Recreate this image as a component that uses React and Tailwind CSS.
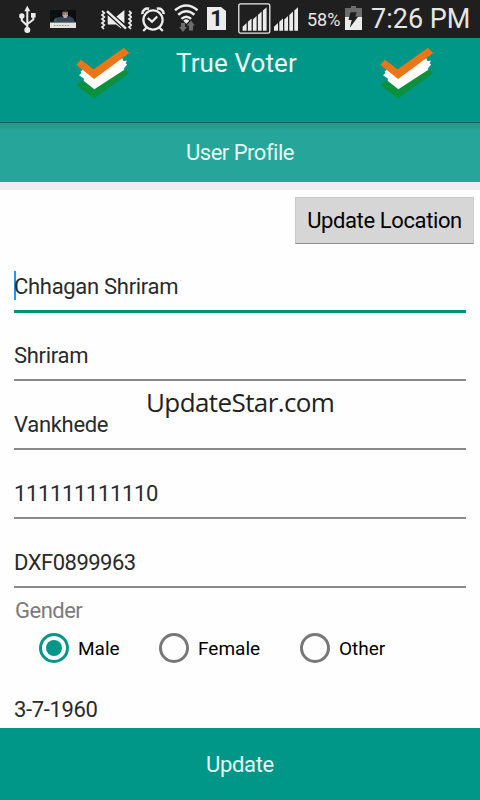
import { useState } from "react";
import clsx from "clsx";

const fields = [
  { name: "firstName", value: "Chhagan Shriram", spacing: "tracking-[-0.3px]" },
  { name: "middleName", value: "Shriram", spacing: "tracking-[-0.3px]" },
  { name: "lastName", value: "Vankhede", spacing: "tracking-[-0.3px]" },
  { name: "mobile", value: "111111111110", spacing: "tracking-[-0.37px]" },
  { name: "voterId", value: "DXF0899963", spacing: "tracking-[-0.5px]" },
];

const genders = [
  { label: "Male", width: "w-[120px]" },
  { label: "Female", width: "w-[141px]" },
  { label: "Other", width: "w-[100px]" },
];

function SignalBars({ x, y }) {
  return (
    <g transform={`translate(${x} ${y})`} fill="#ececec">
      <path d="M0 23.5V19.5L4 15.7V23.5ZM5.3 23.5V14.6L9 11.2V23.5ZM10.3 23.5V12.2L14 8.8V23.5ZM15.3 23.5V7.8L19 4.4V23.5ZM20.3 23.5V3.4L24 0V23.5Z" />
    </g>
  );
}

function StatusBar() {
  return (
    <div className="flex h-[38px] shrink-0 bg-[#1f1f1f] text-[#e6e6e6]">
      {/* usb */}
      <svg className="ml-[18px] h-[38px] w-5" viewBox="18 0 20 38" fill="none" stroke="#ececec" strokeWidth="2">
        <path d="M27.3 10V29M21.8 16V20.5L27 25.5M33.3 16V19.5L27.5 24" />
        <path d="M27.3 5.8L30.3 11.2H24.3Z" fill="#ececec" stroke="none" />
        <circle cx="27.3" cy="30" r="3" fill="#ececec" stroke="none" />
        <circle cx="21.8" cy="16" r="2.7" fill="#ececec" stroke="none" />
        <path d="M31 13h4.6v4.6H31z" fill="#ececec" stroke="none" />
      </svg>
      {/* notification thumbnail */}
      <svg className="ml-3 h-[38px] w-[26px]" viewBox="50 0 26 38">
        <path d="M50 10h26v18H50z" fill="#0c0f10" />
        <path d="M53.5 22l2-4 6-1.5 3 1 5-1.5 4 2.5 1 3.5z" fill="#31465a" />
        <path d="M53.5 21l2-3 1.5.5-1 3z" fill="#356b57" />
        <path d="M62.5 12h5.5v3.5L66.5 18h-2.5L62.5 15.5z" fill="#c2a698" />
        <path d="M62.4 12.6q0-2.2 2.9-2.2t2.9 2.2z" fill="#3b3836" />
        <path d="M63 14h2M66 14h2" stroke="#3c3430" strokeWidth=".8" />
        <path d="M50 22.5h26V28H50z" fill="#e3e4e1" />
        <path d="M50 22.3h26" stroke="#9a7470" strokeWidth="1" strokeDasharray="2 1.3" />
        <path d="M54 25.5h15" stroke="#8e928c" strokeWidth="1" strokeDasharray="1.5 1.2" />
      </svg>
      {/* vibrate, muted */}
      <svg className="ml-6 h-[38px] w-8" viewBox="100 0 32 38" fill="none" stroke="#ececec">
        <path d="M102 11l2.3 2-2.3 2 2.3 2-2.3 2 2.3 2-2.3 2 2.3 2-2.3 2 2 2M129 11l2.3 2-2.3 2 2.3 2-2.3 2 2.3 2-2.3 2 2.3 2-2.3 2 2 2" strokeWidth="1.7" />
        <path d="M107.7 15l13.5 12.6v1l-5.2-4H107.7zM116.3 16.8L124.4 10v13.6z" fill="#ececec" stroke="none" />
        <path d="M107 11.2L126 28.6" stroke="#1f1f1f" strokeWidth="4.4" />
        <path d="M107 11.2L126 28.6" strokeWidth="2.4" />
      </svg>
      {/* alarm */}
      <svg className="ml-2 h-[38px] w-[26px]" viewBox="140 0 26 38" fill="none" stroke="#ececec" strokeWidth="2.3">
        <circle cx="153" cy="20" r="9.6" />
        <path d="M147.7 18l4.3 3.7 5.2-5.2" />
        <path d="M142.3 14.2a5.2 5.2 0 0 1 6.8-5.4M163.7 14.2a5.2 5.2 0 0 0-6.8-5.4" strokeWidth="2.6" />
        <path d="M146.4 27.8l-3.2 3.2M159.6 27.8l3.2 3.2" />
      </svg>
      {/* wifi */}
      <svg className="ml-2 h-[38px] w-6" viewBox="174 0 24 38" fill="none" stroke="#ececec" strokeWidth="2.5">
        <path d="M175 10.3Q186.3 .7 197.6 10.3M178.2 14.8Q186.3 7.6 194.4 14.8M181.5 18.9Q186.3 14.5 191.1 18.9" />
        <path d="M183.3 20.7q3-2.7 6 0l-3 3z" fill="#ececec" stroke="none" />
        <path d="M181 23h4v4h2l-4 5-4-5h2zM189 30.5v-5h-2.3l4.3-5 4 5h-2v5z" fill="#6c6c6c" stroke="none" />
      </svg>
      {/* sim slot */}
      <div className="mt-[7px] ml-[9px] flex h-[23px] w-[19px] items-center justify-center bg-[#ececec] font-['Roboto'] text-[22px] leading-none font-bold text-[#1f1f1f] [clip-path:polygon(0_0,14px_0,19px_4px,19px_23px,0_23px)]">
        1
      </div>
      <svg className="ml-3 h-[38px] w-[61px]" viewBox="238 0 61 38">
        <rect x="238.8" y="3.8" width="31" height="29.4" rx="1.8" fill="none" stroke="#ececec" strokeWidth="1.3" />
        <SignalBars x="242.6" y="7.2" />
        <SignalBars x="274" y="7.2" />
      </svg>
      <span className="ml-2 w-[38px] pt-[9px] text-[18px] leading-[22px] whitespace-nowrap">58%</span>
      {/* charging battery */}
      <svg className="h-[38px] w-[17px]" viewBox="345 0 17 38">
        <path d="M345 8h6V6h5v2h6v9h-17z" fill="#6c6c6c" />
        <path d="M345 17h17v13h-17z" fill="#ececec" />
        <path d="M350.5 12.2h6.3l-1.6 4.2h3l-8.4 11.3 1.9-7.7h-3.2z" fill="#1f1f1f" />
      </svg>
      <span className="ml-[9px] pt-[3px] text-[27px] leading-8 whitespace-nowrap">7:26 PM</span>
    </div>
  );
}

function Logo() {
  return (
    <svg className="h-[84px] w-[54px]" viewBox="76 38 54 84">
      <path d="M76.2 85l5.8-4.5 12 7.5 29.5-19.4 5.8 4.6-35.3 25.5z" fill="#0a9140" />
      <path d="M79 75.3L81.5 73 80.5 71.5 83.5 69 94.5 75 121.5 56 123.3 61 127 60.7 125.5 63.2 127.2 64.6 124.2 68.1 124 70.1 94.3 89.3 83.7 80.7 83.9 78.5z" fill="#fffef8" />
      <path d="M76.2 64.8l4.7-5 12.8 9.4 30.2-21.4 5.4 5.1-35.2 26.2z" fill="#ec7518" />
    </svg>
  );
}

function Radio({ label, width, checked, onSelect }) {
  return (
    <button type="button" onClick={onSelect} className={clsx("flex items-center gap-[9px]", width)}>
      <span
        className={clsx(
          "flex size-[30px] shrink-0 items-center justify-center rounded-full border-[3px]",
          checked ? "border-[#009788]" : "border-[#777]"
        )}
      >
        {checked && <span className="size-4 rounded-full bg-[#009788]" />}
      </span>
      <span className="pt-px text-[19px] leading-6 text-black">{label}</span>
    </button>
  );
}

export default function App() {
  const [gender, setGender] = useState("Male");

  return (
    <div className="relative flex h-[800px] w-[480px] flex-col overflow-hidden bg-[#fefefe] font-['Roboto',sans-serif] text-[22px] text-[#2a2a2a]">
      <StatusBar />

      <header className="flex h-[85px] shrink-0 border-b border-[#0b6a60] bg-[#009788] pl-[76px]">
        <Logo />
        <h1 className="ml-[46px] w-[204px] pt-[9px] text-[26px] leading-8 tracking-[0.1px] text-[#e8f6f4]">True Voter</h1>
        <Logo />
      </header>

      <div className="flex h-[59px] shrink-0 items-center justify-center bg-[#26a69a] bg-linear-to-b from-[#259588] to-[#26a69a] to-[8px] tracking-[-0.5px] text-[#e8f6f4]">
        User Profile
      </div>
      <div className="h-2 shrink-0 bg-[#eeeef0]" />

      <main className="flex min-h-0 flex-1 flex-col">
        <button type="button" className="mt-[7px] mr-[6px] h-[47px] w-[179px] self-end border border-[#c9c9c9] border-b-[#8e8e8e] bg-[#d6d6d6] pt-px text-[22px] leading-none tracking-[-0.38px] whitespace-nowrap text-black">
          Update Location
        </button>

        <div className="mx-[14px]">
          {fields.map((field, i) => (
            <div
              key={field.name}
              className={clsx(
                "flex items-end pb-[9px]",
                i === 0 ? "h-[69px] border-b-[3px] border-[#00917f]" : "border-b-2 border-[#8a8a8a]",
                i === 1 && "h-[68px]",
                i > 1 && "h-[69px]"
              )}
            >
              {i === 0 && <span className="-mr-[2px] mb-px h-[29px] w-[2px] bg-[#2196f3]" />}
              <span className={clsx("leading-7", field.spacing)}>{field.value}</span>
            </div>
          ))}
        </div>

        <p className="mt-[9px] ml-[15px] leading-7 tracking-[-0.5px] text-[#7b7b7b]">Gender</p>
        <div className="mt-2 ml-[39px] flex h-[30px]">
          {genders.map(({ label, width }) => (
            <Radio key={label} label={label} width={width} checked={gender === label} onSelect={() => setGender(label)} />
          ))}
        </div>
        <p className="mt-[33px] ml-[14px] leading-7 tracking-[-0.35px]">3-7-1960</p>
      </main>

      <button type="button" className="h-[72px] shrink-0 bg-[#009788] pt-px tracking-[-0.35px] text-[#e8f6f4]">
        Update
      </button>

      {/* watermark over the form */}
      <span className="absolute top-[384px] left-[146px] font-['Open_Sans',sans-serif] text-[26px] leading-9 tracking-[-0.6px] text-[#222]">
        UpdateStar.com
      </span>
    </div>
  );
}
